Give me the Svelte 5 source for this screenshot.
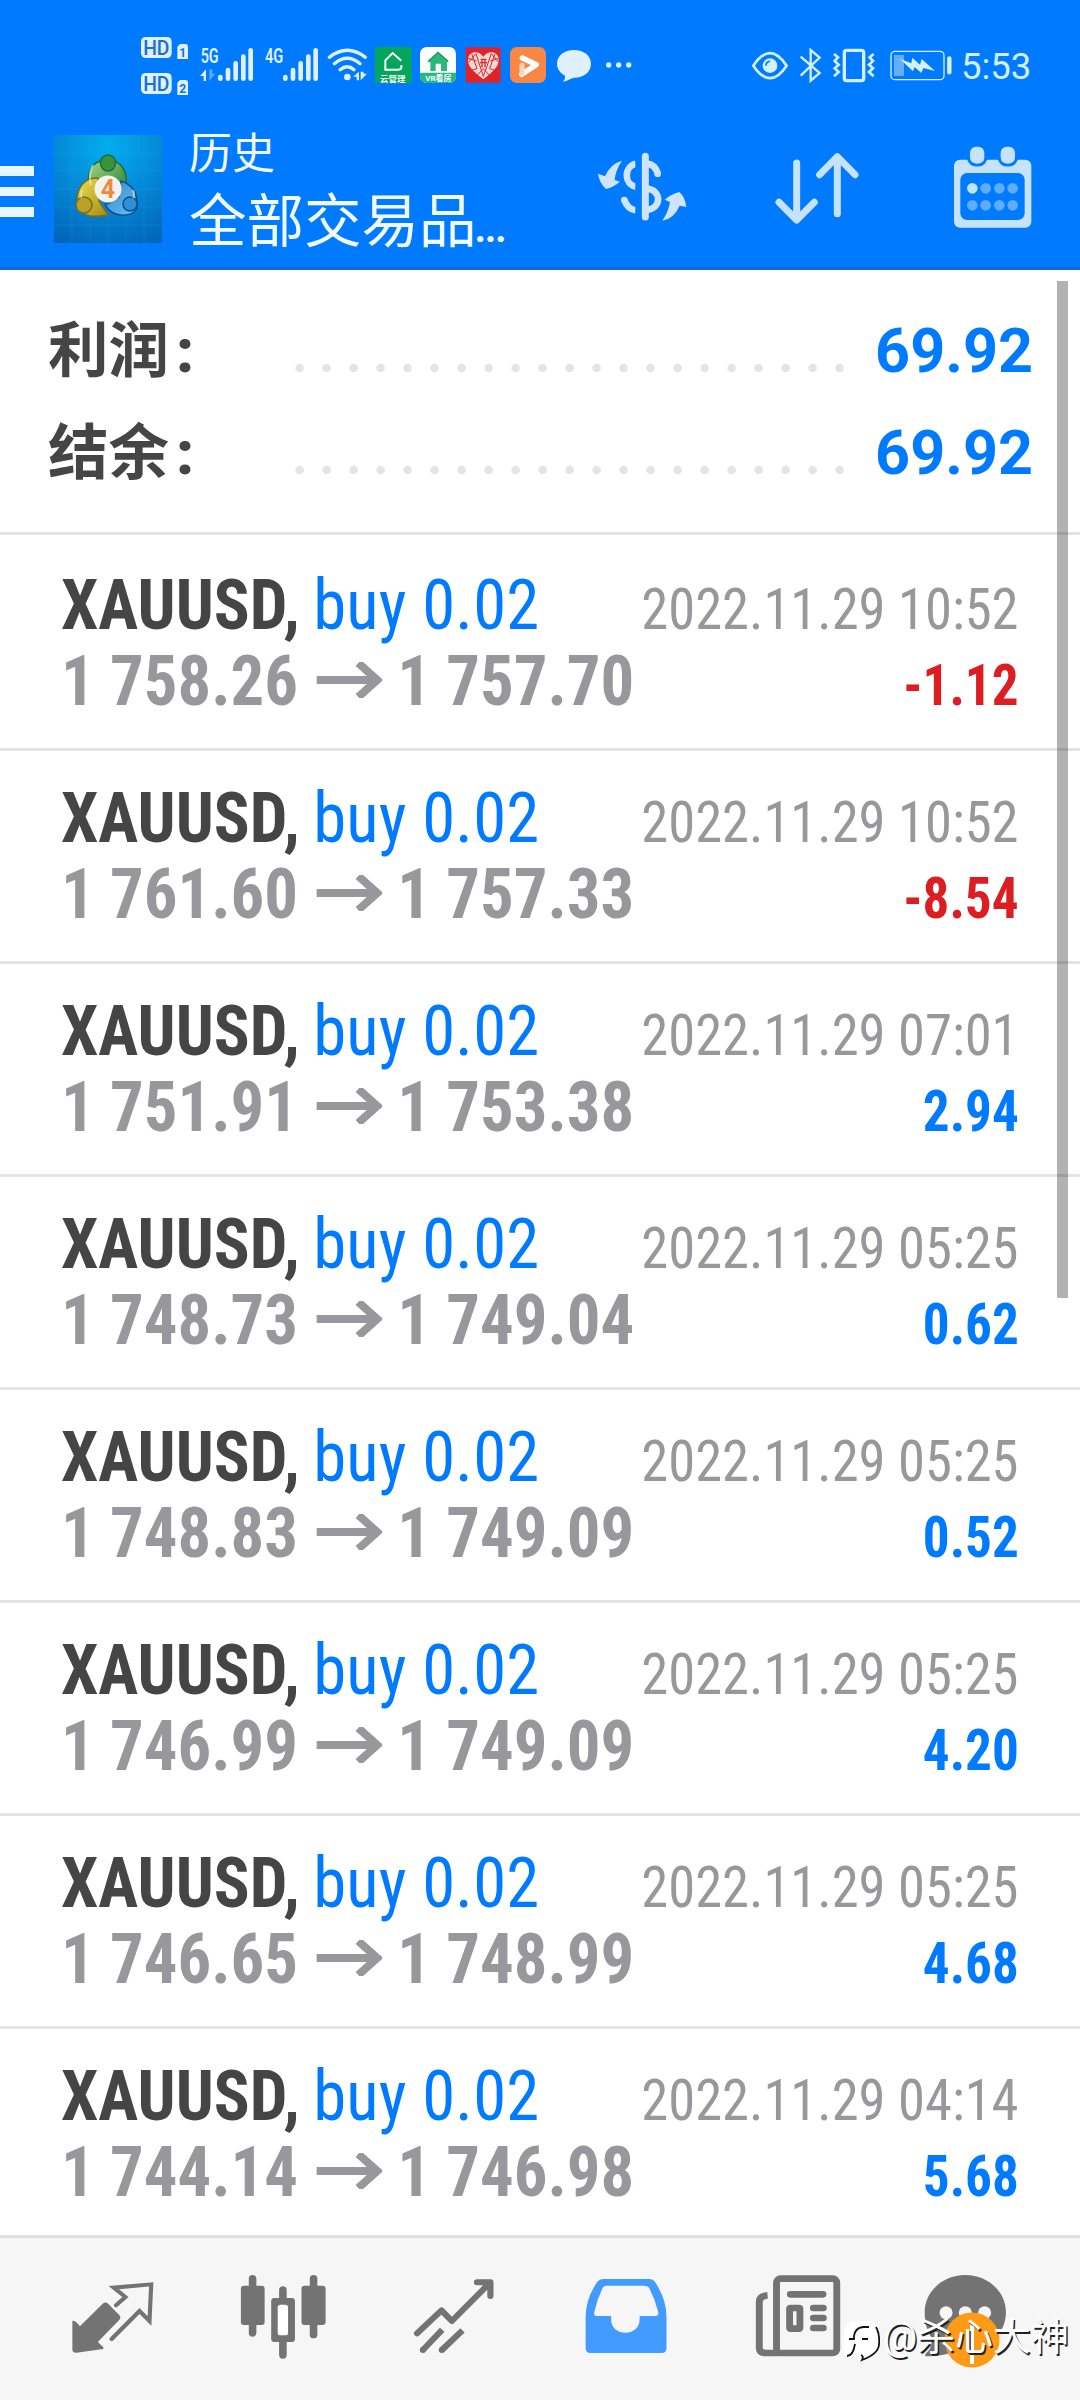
<script lang="ts">
  const summary = [
    { label: "利润", value: "69.92" },
    { label: "结余", value: "69.92" },
  ];

  const deals = [
    { open: "1 758.26", close: "1 757.70", time: "2022.11.29 10:52", profit: -1.12 },
    { open: "1 761.60", close: "1 757.33", time: "2022.11.29 10:52", profit: -8.54 },
    { open: "1 751.91", close: "1 753.38", time: "2022.11.29 07:01", profit: 2.94 },
    { open: "1 748.73", close: "1 749.04", time: "2022.11.29 05:25", profit: 0.62 },
    { open: "1 748.83", close: "1 749.09", time: "2022.11.29 05:25", profit: 0.52 },
    { open: "1 746.99", close: "1 749.09", time: "2022.11.29 05:25", profit: 4.2 },
    { open: "1 746.65", close: "1 748.99", time: "2022.11.29 05:25", profit: 4.68 },
    { open: "1 744.14", close: "1 746.98", time: "2022.11.29 04:14", profit: 5.68 },
  ];
</script>

<main>
  <header>
    <div class="status">
      <svg width="250" height="90" viewBox="0 0 750 270" fill="#dff1ff">
        <rect x="63" y="51" width="92" height="63" rx="14" />
        <rect x="63" y="159" width="92" height="63" rx="14" />
        <path d="M172 80l8-8h16q8 0 8 8v37h-32zM172 188l8-8h16q8 0 8 8v37h-32z" />
        <g class="hd">
          <text x="70" y="104" textLength="78">HD</text>
          <text x="70" y="212" textLength="78">HD</text>
        </g>
        <g class="sim">
          <text x="178" y="111">1</text>
          <text x="178" y="219">2</text>
        </g>
        <g class="net">
          <text x="242" y="128" textLength="54" lengthAdjust="spacingAndGlyphs">5G</text>
          <text x="435" y="128" textLength="55" lengthAdjust="spacingAndGlyphs">4G</text>
        </g>
        <path d="M240 168l18-20v35h-7v-15z" />
        <path d="M268 148v35l18-22h-9v-13z" opacity=".4" />
        <g stroke="#dff1ff" stroke-width="14" stroke-linecap="round">
          <path d="M301 171v5M324 150v26M347 130v46M370 110v66M392 91v85" />
          <path d="M496 171v5M519 150v26M542 130v46M565 110v66M587 91v85" />
        </g>
        <g fill="none" stroke="#dff1ff" stroke-width="10" stroke-linecap="round">
          <path d="M628 112q54-42 108 0M643 131q39-32 77 0M660 149q22-18 42 0" />
        </g>
        <circle cx="682" cy="171" r="10" />
        <path d="M699 170l18-15v26h-7v-11zM722 155v26l19-20h-10v-6z" />
      </svg>
      <svg width="280" height="90" viewBox="-30 0 840 270">
        <rect x="-15" y="81" width="110" height="108" fill="#03a65a" />
        <path d="M64 122L38 99 16 121v28h39q9 0 9-7v-6" fill="none" stroke="#fff" stroke-width="6" />
        <text class="tiny" x="0" y="185" textLength="76" lengthAdjust="spacingAndGlyphs">云管理</text>
        <rect x="120" y="81" width="108" height="108" rx="20" fill="#fff" />
        <path d="M120 158h108v11q0 20-20 20h-68q-20 0-20-20z" fill="#25b883" />
        <path d="M142 127l32-30 33 30h-6v26h-18v-22h-16v22h-16v-26z" fill="#2db77d" />
        <path d="M145 124l29-27 30 27" fill="none" stroke="#18945f" stroke-width="4" />
        <text class="tiny" x="136" y="184" textLength="78" lengthAdjust="spacingAndGlyphs">VR看房</text>
        <rect x="257" y="82" width="105" height="106" rx="3" fill="#df2329" />
        <path d="M310 178C284 157 264 142 264 120c0-26 31-31 46-10 15-21 46-16 46 10 0 22-20 37-46 58z" fill="#f6d9d5" />
        <g fill="none" stroke="#df2329" stroke-width="3">
          <path d="M266 127l22-26 22 68M356 127l-22-26-24 68M275 101l16 45-15 4M345 101l-16 45 15 4M264 115l25 8M356 115l-25 8M290 168l20-22 20 22" />
        </g>
        <path d="M302 118h17M300 128h21M306 118v24M315 118v24" stroke="#df2329" stroke-width="4" />
        <rect x="390" y="81" width="108" height="108" rx="20" fill="#f88645" />
        <path d="M427 114l42 20-44 29" fill="none" stroke="#fff" stroke-width="16" stroke-linecap="round" stroke-linejoin="round" />
        <path d="M426 136v22" stroke="#ffd3b5" stroke-width="15" stroke-linecap="round" />
        <path d="M582 90c29 0 51 17 51 41 0 26-23 41-49 42-12 1-22 11-36 12 6-5 8-11 7-18-14-8-24-20-24-36 0-24 22-41 51-41z" fill="#dff1ff" />
        <g fill="#dff1ff">
          <circle cx="686" cy="135" r="8" />
          <circle cx="716" cy="135" r="8" />
          <circle cx="746" cy="135" r="8" />
        </g>
      </svg>
      <svg class="indicators" width="225" height="90" viewBox="0 0 675 270" fill="none" stroke="#d3f0ff">
        <path d="M70 137q50-75 100 0-50 75-100 0z" stroke-width="8" stroke-linejoin="round" />
        <circle cx="120" cy="137" r="22" fill="#d3f0ff" stroke="none" />
        <path d="M108 137q0-12 12-13" stroke="#007aff" stroke-width="5" />
        <path d="M212 110l57 49-27 23V90l27 23-57 54" stroke-width="7" />
        <rect x="343" y="91" width="58" height="91" rx="7" stroke-width="10" />
        <path d="M312 102l12 10-10 11 12 11-12 11 12 11-14 13M431 102l-12 10 10 11-12 11 12 11-12 11 14 13" stroke-width="8" />
        <rect x="483" y="94" width="159" height="85" rx="12" stroke-width="4" />
        <rect x="492" y="105" width="30" height="63" fill="#62afff" stroke="none" />
        <path d="M509 116l35 14 3-17 23 21 5-17 40 36-35-9-6 15-20-18-5 13z" fill="#d3f0ff" stroke="none" />
        <path d="M658 115v42" stroke-width="13" stroke-linecap="round" />
      </svg>
      <span class="clock">5:53</span>
    </div>

    <div class="toolbar">
      <div class="menu"><i></i><i></i><i></i></div>
      <svg class="logo" width="108" height="108" viewBox="0 0 108 108">
        <defs>
          <radialGradient id="sky" cx=".5" cy=".1" r="1">
            <stop offset="0" stop-color="#02aeef" />
            <stop offset=".5" stop-color="#0488d6" />
            <stop offset="1" stop-color="#0264b8" />
          </radialGradient>
          <linearGradient id="green" x2="1" y2="1">
            <stop offset="0" stop-color="#a4d68a" />
            <stop offset="1" stop-color="#1b7d26" />
          </linearGradient>
          <linearGradient id="gold" x2="1" y2="1">
            <stop offset="0" stop-color="#efe04f" />
            <stop offset="1" stop-color="#a58a10" />
          </linearGradient>
          <linearGradient id="azure" x2="1" y2="1">
            <stop offset="0" stop-color="#2b86cf" />
            <stop offset="1" stop-color="#6fc0f2" />
          </linearGradient>
        </defs>
        <rect width="108" height="108" fill="url(#sky)" />
        <path d="M18 0v108M36 0v108M54 0v108M72 0v108M90 0v108M0 18h108M0 36h108M0 54h108M0 72h108M0 90h108" stroke="#29a9e8" stroke-opacity=".2" />
        <g stroke-width="1.5">
          <path d="M36 53C30 32 43 25 54 25s22 10 17 30l-8 10-18-16z" fill="url(#green)" stroke="#246b38" />
          <path d="M44 43C30 42 22 53 23 70c6 14 19 12 31 10l-9-14z" fill="url(#gold)" stroke="#756d1f" />
          <path d="M67 46c13 4 17 14 16 27-5 10-24 10-32-3l14-8z" fill="url(#azure)" stroke="#0d4f8f" />
          <ellipse cx="54" cy="28" rx="7.500" ry="8" fill="#37943b" stroke="#246b38" />
          <circle cx="30" cy="70" r="8" fill="#b9a227" stroke="#756d1f" />
          <circle cx="76" cy="69" r="7" fill="#2f8fd6" stroke="#0d4f8f" />
        </g>
        <path d="M39 30q-5 10-2 20M28 55q-2 7 0 8M79 55q2 6 0 8" fill="none" stroke="#e8f5c8" stroke-width="2" opacity=".6" />
        <circle cx="54" cy="54" r="13.500" fill="#f4f2f0" />
        <text class="four" x="54" y="63" text-anchor="middle">4</text>
      </svg>
      <div class="titles">
        <span class="title">历史</span>
        <span class="subtitle">全部交易品<span class="dots">...</span></span>
      </div>
      <div class="actions">
        <svg width="100" height="100" viewBox="99 90 300 300" fill="#cfe4ff">
          <path d="M262 161q24 3 31 30M262 236c43 6 43 58 0 64M228 161c-37 8-37 63 0 69M193 269q9 28 35 32" fill="none" stroke="#cfe4ff" stroke-width="20" />
          <circle cx="293" cy="191" r="10" />
          <circle cx="193" cy="270" r="10" />
          <path d="M226 145h20v180h-20z" fill="#007aff" />
          <path d="M256 139v182" stroke="#cfe4ff" stroke-width="21" stroke-linecap="round" />
          <path d="M186 152q-20 30-22 58l16 5q-20 17-42 22-20-18-24-46l21 8q16-38 51-47zM307 332q18-26 23-56l-16-7q20-17 44-23 18 16 21 45l-20-4q-18 40-52 45z" />
        </svg>
        <svg width="100" height="100" viewBox="621 90 300 300" fill="none" stroke="#c5e2ff" stroke-width="21" stroke-linecap="round" stroke-linejoin="round">
          <path d="M710 159v170M657 277l53 53 53-53M832 311V140M779 194l53-54 53 54" />
        </svg>
        <svg class="calendar" width="100" height="100" viewBox="1149 90 300 300" fill="#c5e2ff">
          <rect x="1182" y="149" width="232" height="204" rx="18" />
          <rect x="1201" y="189" width="193" height="141" rx="20" fill="#007aff" />
          <g stroke="#007aff" stroke-width="9">
            <rect x="1226" y="106" width="51" height="59" rx="22" />
            <rect x="1318" y="106" width="51" height="59" rx="22" />
          </g>
          <path d="M1220 105h62v44h-62zM1312 105h62v44h-62z" fill="#007aff" />
          <rect x="1230" y="110" width="43" height="50" rx="18" />
          <rect x="1322" y="110" width="43" height="50" rx="18" />
          <circle cx="1237" cy="235" r="16" fill="#bfe6ff" />
          <g fill="#5eadff">
            <circle cx="1277" cy="235" r="16" />
            <circle cx="1318" cy="235" r="16" />
            <circle cx="1358" cy="235" r="16" />
            <circle cx="1237" cy="286" r="16" />
            <circle cx="1277" cy="286" r="16" />
            <circle cx="1318" cy="286" r="16" />
            <circle cx="1358" cy="286" r="16" />
          </g>
        </svg>
      </div>
    </div>
  </header>

  <section class="summary">
    {#each summary as item}
      <div class="total">
        <span class="label">{item.label}<b>:</b></span>
        <svg class="leader" width="560" height="10">
          {#each Array(21) as _, i}
            <circle cx={9.6 + i * 27} cy="5" r="4.300" fill="#e4e4e4" />
          {/each}
        </svg>
        <span class="sum">{item.value}</span>
      </div>
    {/each}
  </section>

  <section class="deals">
    {#each deals as deal}
      <article>
        <div class="left">
          <div class="symbol"><b>XAUUSD,</b> <span>buy 0.02</span></div>
          <div class="prices">
            <span>{deal.open}</span>
            <svg width="69" height="36" viewBox="0 0 66 36" preserveAspectRatio="none" fill="none" stroke="#98989c" stroke-width="8">
              <path d="M0 18h60M42 1l19 17-19 17" />
            </svg>
            <span>{deal.close}</span>
          </div>
        </div>
        <div class="right">
          <span class="time">{deal.time}</span>
          <span class="profit" class:loss={deal.profit < 0}>{deal.profit.toFixed(2)}</span>
        </div>
      </article>
    {/each}
  </section>

  <nav>
    <svg viewBox="181.800 120 290.400 300" preserveAspectRatio="none" fill="#737373">
      <path d="M209 302q12 0 22 17l66-68q8-7 16 0l32 34q7 7 0 15l-62 66 16 16q2 6-6 6l-72 10q-12 1-12-10z" />
      <path d="M336 256l27-25-34-28 109-10-5 110-29-30-81 84" fill="none" stroke="#737373" stroke-width="12" stroke-linecap="round" />
    </svg>
    <svg viewBox="679 120 290.400 300" preserveAspectRatio="none" fill="#737373">
      <path d="M733 176v163M910 176v168M821 210v195" stroke="#737373" stroke-width="22" stroke-linecap="round" />
      <rect x="699" y="197" width="69" height="118" rx="9" />
      <rect x="875" y="197" width="70" height="118" rx="9" />
      <rect x="787" y="234" width="69" height="132" rx="9" />
      <rect x="806" y="254" width="30" height="92" rx="8" fill="#fff" />
    </svg>
    <svg viewBox="1176 120 290.400 300" preserveAspectRatio="none" fill="none" stroke="#737373" stroke-width="18" stroke-linejoin="round">
      <path d="M1211 340l71-69 30 32 108-112M1385 187h39v41" stroke-linecap="round" />
      <path d="M1284 329l-56 61M1343 331l-60 59" />
      <path d="M1228 390h0M1283 390h0" stroke-linecap="round" />
    </svg>
    <svg viewBox="105.100 120 290.400 300" preserveAspectRatio="none" fill="#429bff">
      <path d="M184 177h135q10 0 15 8 34 52 34 106v93q0 15-15 15H148q-15 0-15-15v-93q0-54 34-106 6-8 17-8z" />
      <path d="M194 197h109q11 0 15 8 17 34 26 72 2 11-9 11h-45v10c0 54-83 54-83 0v-10h-42q-9 0-7-11 8-38 24-72 3-8 12-8z" fill="#f6f6f6" />
    </svg>
    <svg viewBox="602.300 120 290.400 300" preserveAspectRatio="none" fill="none" stroke="#737373" stroke-width="20">
      <rect x="688" y="176" width="175" height="223" rx="12" />
      <path d="M662 226q-24 2-24 20v138q0 15 18 15h40" />
      <path d="M728 223h95M795 264h29M795 294h29M795 324h29" stroke-linecap="round" />
      <rect x="726" y="264" width="30" height="62" rx="2" />
    </svg>
    <svg viewBox="1099.500 120 290.400 300" preserveAspectRatio="none" fill="#737373">
      <path d="M1234 165c66 0 118 50 118 112s-48 112-118 112c-25 0-40 17-112 20-8-1-5-7 1-12 13-12 15-30 11-47-12-20-18-45-18-73 0-62 52-112 118-112z" />
      <g fill="#f6f6f6">
        <circle cx="1178" cy="278" r="19" />
        <circle cx="1234" cy="278" r="19" />
        <circle cx="1290" cy="278" r="19" />
      </g>
    </svg>
  </nav>

  <div class="scrollbar"></div>

  <svg class="badge" width="56" height="56" viewBox="0 0 56 56">
    <circle cx="28" cy="28" r="27.500" fill="#ff9a17" />
    <path d="M28 13v39" stroke="#fff" stroke-width="4" />
  </svg>
  <div class="watermark">
    <svg width="38" height="46" viewBox="0 0 38 46">
      <path d="M9 3h21q7 4 7 13v12q-1 11-19 16l-3-5H4q-4-3-3-12l1-14q2-6 7-10z" fill="#fff" />
      <path d="M27 9h-6q-8 1-9 9v3H7M20 21h6M5 38q6 0 8-12M34 9q4 7 3 18-1 9-17 15 2-4-1-5" fill="none" stroke="#111" stroke-width="1.800" />
    </svg>
    <span>@杀心大神</span>
  </div>
</main>

<style>
  :global(body) {
    background: #fff;
  }

  main {
    position: relative;
    width: 1080px;
    height: 2400px;
    overflow: hidden;
    display: flex;
    flex-direction: column;
    font-family: Roboto, "Noto Sans CJK SC", sans-serif;
  }

  svg {
    display: block;
    flex: none;
  }

  header {
    box-sizing: border-box;
    height: 270px;
    background: #007aff;
    border-bottom: 3px solid #0f6ad4;
    color: #f0faff;
  }

  .status {
    display: flex;
    height: 110px;
    padding: 20px 0 0 120px;
    box-sizing: border-box;
  }

  .indicators {
    margin-left: 80px;
  }

  .clock {
    margin-left: 6px;
    font-size: 36.500px;
    line-height: 93px;
    color: #d3f0ff;
  }

  .hd text {
    fill: #1670d8;
    font-size: 58px;
    font-weight: 500;
  }

  .sim text {
    fill: #1670d8;
    font-size: 36px;
    font-weight: 700;
  }

  .net text {
    font-size: 60px;
    font-weight: 600;
  }

  .tiny {
    fill: #fff;
    font-size: 24px;
    font-weight: 700;
  }

  .toolbar {
    display: flex;
    height: 157px;
  }

  .menu {
    display: flex;
    flex-direction: column;
    gap: 11px;
    width: 34px;
    padding-top: 56px;
  }

  .menu i {
    height: 9.500px;
    background: #e8f6ff;
  }

  .logo {
    margin: 25px 0 0 20px;
  }

  .four {
    fill: #ee8a3c;
    font-size: 25px;
    font-weight: 700;
  }

  .titles {
    display: flex;
    flex-direction: column;
    width: 404px;
    margin-left: 27px;
  }

  .title {
    font-size: 43px;
    line-height: 50px;
    margin-top: 19px;
  }

  .subtitle {
    font-size: 57.500px;
    line-height: 70px;
    margin-top: 9px;
    white-space: nowrap;
  }

  .dots {
    margin-left: -2px;
    font-size: 40px;
    font-weight: 700;
    letter-spacing: -1.300px;
  }

  .actions {
    display: flex;
    gap: 74px;
    margin-top: 30px;
  }

  .calendar {
    margin-left: 2px;
  }

  .summary {
    box-sizing: border-box;
    height: 265px;
    padding-top: 31px;
    border-bottom: 3px solid #e4e4e4;
  }

  .total {
    display: flex;
    align-items: center;
    height: 102px;
    padding: 0 47px 0 48px;
  }

  .label {
    width: 242px;
    color: #454545;
    font-size: 60.500px;
    font-weight: 700;
    line-height: 102px;
  }

  .label b {
    margin-left: 7px;
  }

  .leader {
    margin-top: 32px;
  }

  .sum {
    flex: 1;
    margin-top: -3px;
    color: #007aff;
    font-size: 62px;
    font-weight: 700;
    line-height: 101px;
    text-align: right;
    transform: scaleX(0.985);
    transform-origin: right;
  }

  .deals {
    flex: 1;
    padding-top: 3px;
    overflow: hidden;
  }

  article {
    box-sizing: border-box;
    display: flex;
    justify-content: space-between;
    height: 213px;
    padding: 29px 61px 0 61px;
    border-bottom: 3px solid #e4e4e4;
    font-stretch: 75%;
    white-space: nowrap;
  }

  .left {
    width: 540px;
    transform: scaleX(0.953);
    transform-origin: left;
  }

  .symbol,
  .prices {
    height: 76px;
    font-size: 70px;
    line-height: 76px;
  }

  .symbol b {
    color: #454545;
    margin-right: -2px;
  }

  .symbol span {
    color: #007aff;
    letter-spacing: 0.200px;
  }

  .prices {
    display: flex;
    align-items: center;
    gap: 19px;
    color: #98989c;
    font-weight: 700;
  }

  .prices svg {
    margin: -2px -3px 0 0;
  }

  .right {
    display: flex;
    flex: none;
    flex-direction: column;
    align-items: flex-end;
    width: 400px;
    margin-top: 5px;
    font-size: 57.500px;
    line-height: 76px;
  }

  .time {
    color: #98989c;
    transform: scaleX(0.949);
    transform-origin: right;
  }

  .profit {
    color: #007aff;
    font-weight: 700;
    transform: scaleX(0.925);
    transform-origin: right;
  }

  .loss {
    color: #dc1e23;
  }

  nav {
    box-sizing: border-box;
    display: flex;
    gap: 71.200px;
    height: 165px;
    padding: 22px 0 0 62.600px;
    background: #f6f6f6;
    border-top: 3px solid #e0e0e0;
  }

  nav svg {
    width: 100px;
    height: 100px;
  }

  .scrollbar {
    position: absolute;
    top: 281px;
    left: 1057px;
    width: 11px;
    height: 1017px;
    background: rgba(0, 0, 0, 0.3);
  }

  .badge {
    position: absolute;
    top: 2312px;
    left: 944px;
  }

  .watermark {
    position: absolute;
    top: 2318px;
    left: 842px;
    display: flex;
    align-items: center;
    gap: 3px;
    color: #fff;
    font-size: 38px;
    line-height: 40px;
    text-shadow: 1.500px 1.500px 0.500px #222;
    white-space: nowrap;
  }

  .watermark span {
    margin-top: -8px;
  }
</style>
